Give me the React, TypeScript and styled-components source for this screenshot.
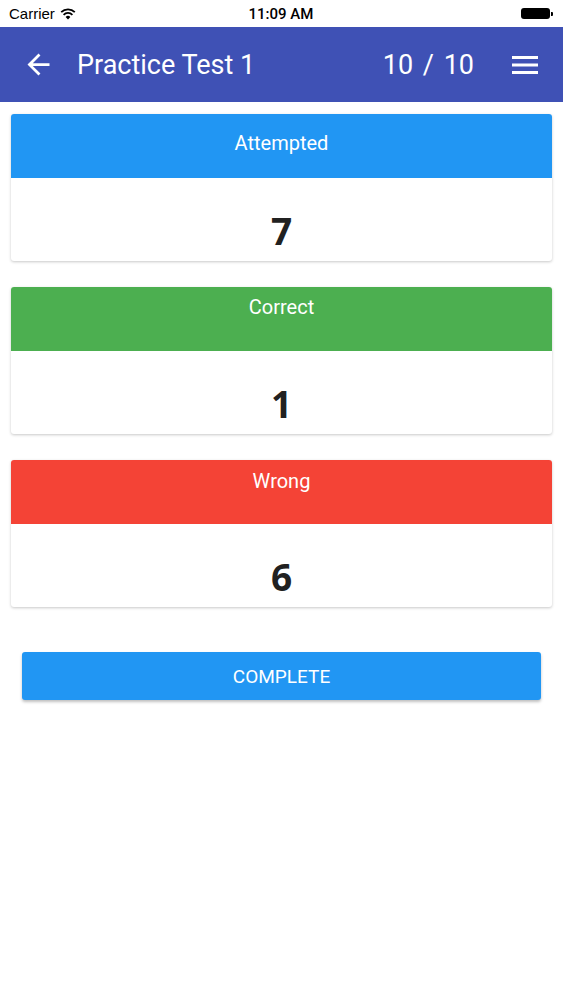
import React from "react";
import styled, { createGlobalStyle } from "styled-components";

const Colors = {
  INDIGO: "#3F51B5",
  BLUE: "#2196F3",
  GREEN: "#4CAF50",
  RED: "#F44336",
  TEXT: "#212121",
};

type ScoreItem = {
  label: string;
  value: number;
  color: string;
  labelTop: number;
};

const SCORES: ScoreItem[] = [
  { label: "Attempted", value: 7, color: Colors.BLUE, labelTop: 17 },
  { label: "Correct", value: 1, color: Colors.GREEN, labelTop: 8 },
  { label: "Wrong", value: 6, color: Colors.RED, labelTop: 9 },
];

const GlobalStyle = createGlobalStyle`
  html, body {
    margin: 0;
    padding: 0;
    background: #fff;
  }
  body {
    font-family: Roboto, "Noto Sans", sans-serif;
  }
`;

const Screen = styled.div`
  width: 563px;
  min-height: 1000px;
  display: flex;
  flex-direction: column;
  background: #fff;
`;

const StatusBar = styled.div`
  height: 27px;
  display: grid;
  grid-template-columns: 1fr auto 1fr;
  align-items: center;
  padding: 0 10px 0 9px;
  font-family: "Liberation Sans", Arial, sans-serif;
  font-size: 15px;
  color: #000;
`;

const Carrier = styled.div`
  display: flex;
  align-items: center;
  gap: 5px;
`;

const Clock = styled.div`
  font-family: Roboto, sans-serif;
  font-weight: 500;
  font-size: 15px;
`;

const Battery = styled.div`
  justify-self: end;
  display: flex;
  align-items: center;
  gap: 1px;
`;

const BatteryBody = styled.div`
  width: 29px;
  height: 11px;
  border-radius: 3px;
  background: #000;
`;

const BatteryTip = styled.div`
  width: 2px;
  height: 4px;
  border-radius: 0 1px 1px 0;
  background: #000;
`;

const Toolbar = styled.header`
  height: 75px;
  background: ${Colors.INDIGO};
  display: flex;
  align-items: center;
  padding: 0 25px 0 22px;
  color: #fff;
`;

const IconButton = styled.button`
  background: none;
  border: 0;
  padding: 0;
  display: flex;
  align-items: center;
  color: #fff;
`;

const Title = styled.h1`
  flex: 1;
  margin: 0 0 0 22px;
  font-size: 27px;
  font-weight: 400;
`;

const Counter = styled.div`
  font-size: 27px;
  margin-right: 38px;
  word-spacing: 3px;
`;

const Content = styled.main`
  display: flex;
  flex-direction: column;
  gap: 26px;
  padding: 12px 11px 0;
`;

const Card = styled.section`
  border-radius: 3px;
  overflow: hidden;
  background: #fff;
  box-shadow: 0 1px 3px rgba(0, 0, 0, 0.22);
`;

const CardHeader = styled.div<{ $color: string; $top: number }>`
  height: 64px;
  background: ${(p) => p.$color};
  color: #fff;
  font-size: 20px;
  display: flex;
  justify-content: center;
  padding-top: ${(p) => p.$top}px;
  box-sizing: border-box;
`;

const CardValue = styled.div`
  height: 83px;
  display: flex;
  justify-content: center;
  align-items: center;
  padding-top: 22px;
  box-sizing: border-box;
  font-family: "Open Sans", sans-serif;
  font-weight: 700;
  font-size: 37px;
  color: ${Colors.TEXT};
`;

const CompleteButton = styled.button`
  margin: 45px 22px 0;
  height: 48px;
  border: 0;
  border-radius: 3px;
  background: ${Colors.BLUE};
  color: #fff;
  font-family: Roboto, sans-serif;
  font-size: 19px;
  text-transform: uppercase;
  box-shadow: 0 2px 3px rgba(0, 0, 0, 0.25);
`;

function WifiIcon() {
  return (
    <svg width="16" height="12" viewBox="0 0 16 12">
      <path d="M8 11.5 L5.6 9 A3.4 3.4 0 0 1 10.4 9 Z" fill="#000" />
      <path
        d="M3.6 6.8 A6.2 6.2 0 0 1 12.4 6.8"
        stroke="#000"
        strokeWidth="1.8"
        fill="none"
      />
      <path
        d="M1.2 4.2 A9.6 9.6 0 0 1 14.8 4.2"
        stroke="#000"
        strokeWidth="1.8"
        fill="none"
      />
    </svg>
  );
}

function BackIcon() {
  return (
    <svg width="33" height="33" viewBox="0 0 24 24">
      <path
        d="M20 11H7.83l5.59-5.59L12 4l-8 8 8 8 1.41-1.41L7.83 13H20v-2z"
        fill="#fff"
      />
    </svg>
  );
}

function MenuIcon() {
  return (
    <svg width="26" height="20" viewBox="0 0 26 20">
      <rect x="0" y="1" width="26" height="3" fill="#fff" />
      <rect x="0" y="8.5" width="26" height="3" fill="#fff" />
      <rect x="0" y="16" width="26" height="3" fill="#fff" />
    </svg>
  );
}

export default function App() {
  return (
    <Screen>
      <GlobalStyle />
      <StatusBar>
        <Carrier>
          Carrier
          <WifiIcon />
        </Carrier>
        <Clock>11:09 AM</Clock>
        <Battery>
          <BatteryBody />
          <BatteryTip />
        </Battery>
      </StatusBar>
      <Toolbar>
        <IconButton type="button">
          <BackIcon />
        </IconButton>
        <Title>Practice Test 1</Title>
        <Counter>10 / 10</Counter>
        <IconButton type="button">
          <MenuIcon />
        </IconButton>
      </Toolbar>
      <Content>
        {SCORES.map((item) => (
          <Card key={item.label}>
            <CardHeader $color={item.color} $top={item.labelTop}>
              {item.label}
            </CardHeader>
            <CardValue>{item.value}</CardValue>
          </Card>
        ))}
      </Content>
      <CompleteButton type="button">Complete</CompleteButton>
    </Screen>
  );
}
